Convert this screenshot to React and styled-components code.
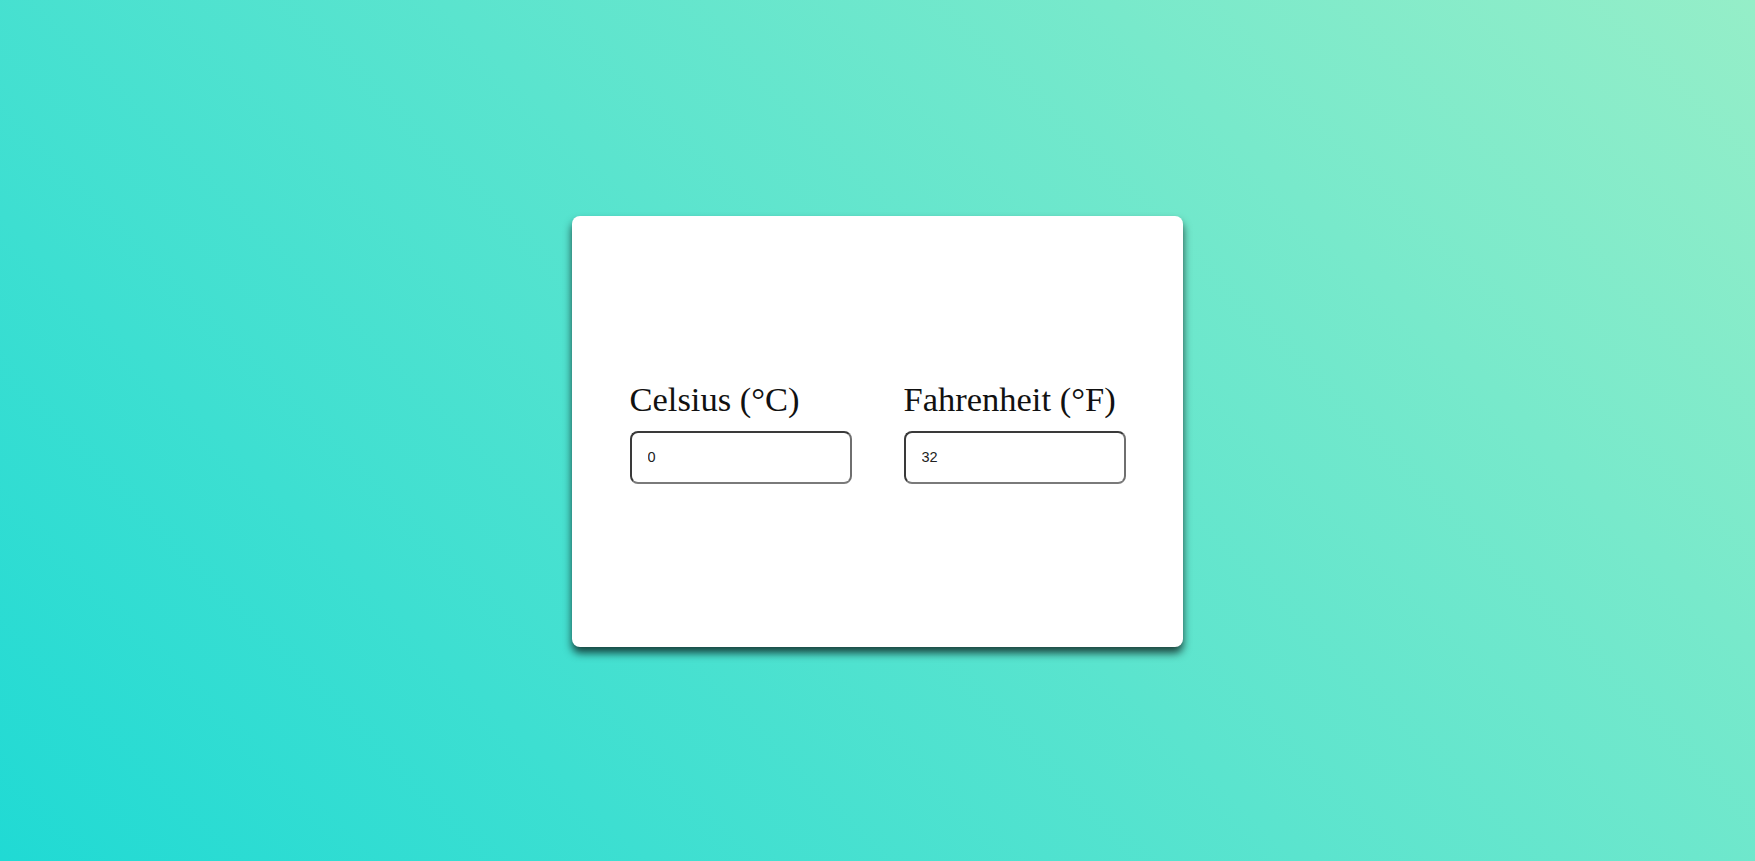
import styled, { createGlobalStyle } from "styled-components"

const GlobalStyle = createGlobalStyle`
    html, body {
        margin: 0;
        padding: 0;
        height: 100%;
    }
    #root {
        height: 100%;
    }
`
const Page = styled.div`
    width: 100%;
    height: 100vh;
    box-sizing: border-box;
    padding-top: 2px;
    display: flex;
    align-items: center;
    justify-content: center;
    background: linear-gradient(45deg, #20dad4, #95eec8);
`
const Card = styled.div`
    width: 611px;
    height: 431px;
    box-sizing: border-box;
    background-color: #fff;
    border-radius: 8px;
    box-shadow: 0 6px 8px rgba(0, 0, 0, 0.7);
    display: flex;
    align-items: center;
    justify-content: center;
    gap: 52px;
`
const Field = styled.div`
    display: flex;
    flex-direction: column;
    gap: 12px;
`
const Label = styled.label`
    font-family: "Liberation Serif", "Times New Roman", serif;
    font-size: 34.5px;
    color: #111;
`
const Input = styled.input`
    width: 222px;
    height: 53px;
    box-sizing: border-box;
    padding: 0 16px;
    border: 2px solid;
    border-color: #3a3a3a #6f6f6f #7a7a7a #3a3a3a;
    border-radius: 8px;
    font-family: "Liberation Sans", Arial, sans-serif;
    font-size: 14.5px;
    color: #222;
    outline: 0;
`

const TempField = ({label, value}) => {
  return (
    <Field>
      <Label>{label}</Label>
      <Input type="text" defaultValue={value} />
    </Field>
  )
}

const App = () => {
  return (
    <>
      <GlobalStyle />
      <Page>
        <Card>
          <TempField label="Celsius (°C)" value="0" />
          <TempField label="Fahrenheit (°F)" value="32" />
        </Card>
      </Page>
    </>
  )
}

export default App
